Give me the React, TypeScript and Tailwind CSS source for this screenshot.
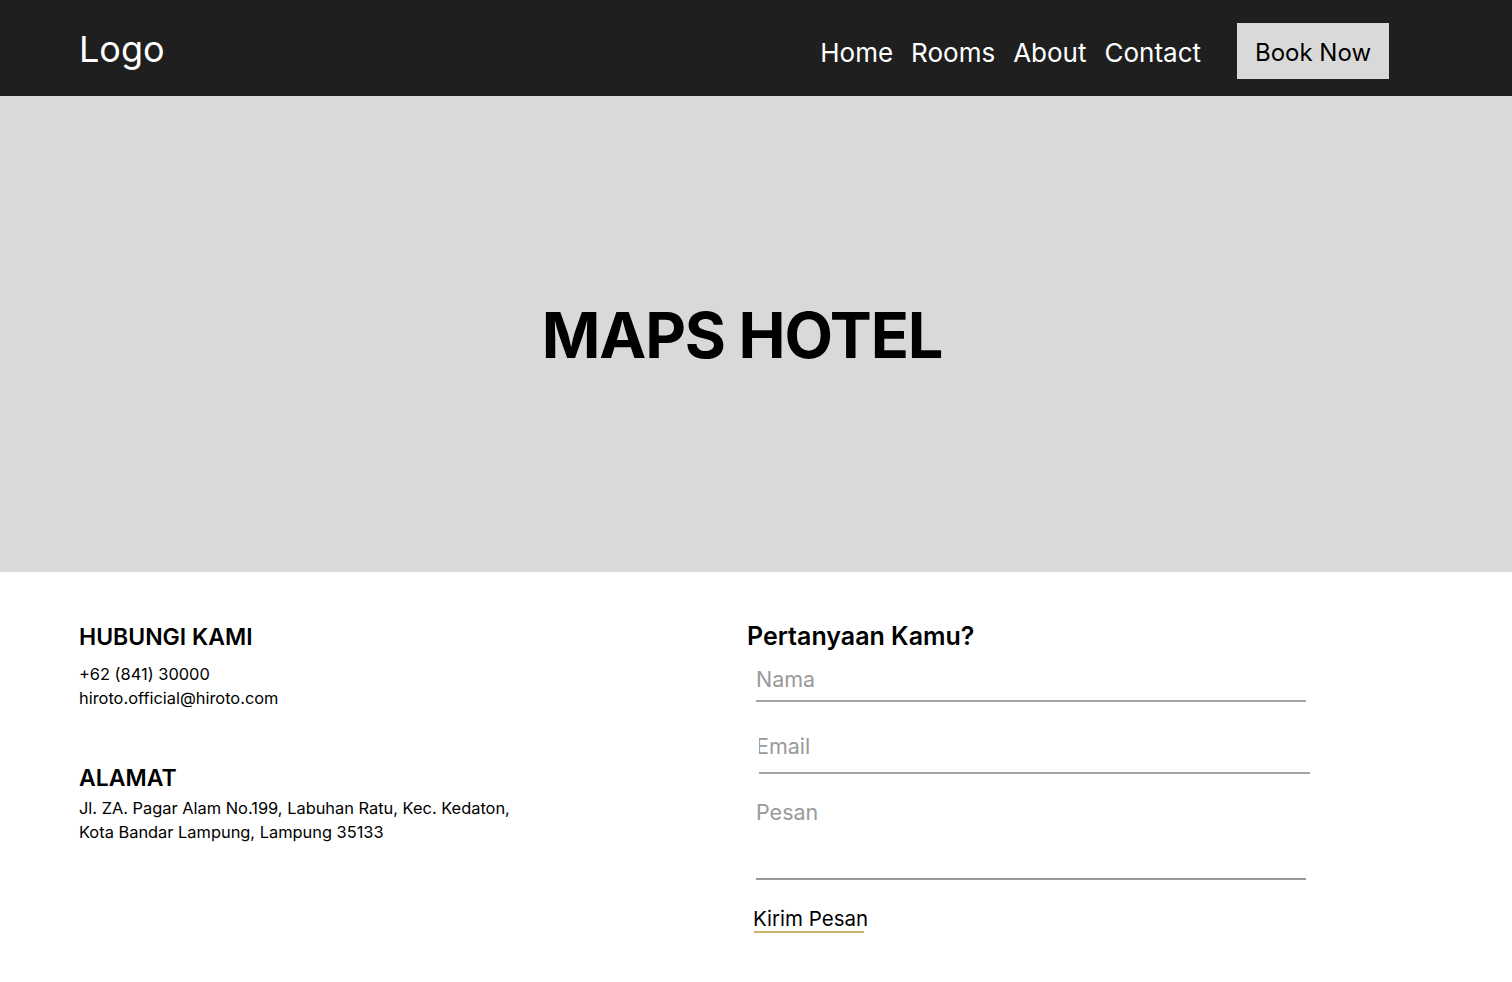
export default function App() {
  return (
    <div className="min-h-screen bg-white font-['Inter',sans-serif] text-black">
      {/* Header */}
      <header className="h-[96px] bg-[#1f1f1f] flex items-center justify-between pl-[79px] pr-[123px]">
        <div className="text-[36px] text-white mt-[2px]">Logo</div>
        <nav className="flex items-center mt-[6px]">
          <ul className="flex items-center gap-[18px] text-[26px] text-white mr-[36px] mt-[3px]">
            <li>Home</li>
            <li>Rooms</li>
            <li>About</li>
            <li>Contact</li>
          </ul>
          <button className="w-[152px] h-[56px] pt-[3px] bg-[#d9d9d9] text-[24px] text-black">Book Now</button>
        </nav>
      </header>

      {/* Hero */}
      <section className="h-[476px] bg-[#d9d9d9] flex items-center justify-center">
        <h1 className="text-[63px] font-bold tracking-[-1.2px] -ml-[28px] mt-[2px]">MAPS HOTEL</h1>
      </section>

      {/* Contact */}
      <section className="grid grid-cols-[668px_1fr] pl-[79px] pt-[50px] pb-[40px]">
        <div>
          <h2 className="text-[23px] font-semibold leading-[30px]">HUBUNGI KAMI</h2>
          <div className="mt-[10px] text-[16.4px] leading-[24px]">
            <p>+62 (841) 30000</p>
            <p>hiroto.official@hiroto.com</p>
          </div>
          <h2 className="mt-[53px] text-[23px] font-semibold leading-[30px]">ALAMAT</h2>
          <div className="mt-[3px] text-[16.4px] leading-[24px]">
            <p>Jl. ZA. Pagar Alam No.199, Labuhan Ratu, Kec. Kedaton,</p>
            <p>Kota Bandar Lampung, Lampung 35133</p>
          </div>
        </div>
        <div>
          <h2 className="text-[25px] font-semibold leading-[30px] -mt-[1px]">Pertanyaan Kamu?</h2>
          <form className="flex flex-col">
            <input
              placeholder="Nama"
              className="ml-[9px] -mt-[1px] w-[550px] h-[52px] pt-[8px] text-[21.5px] border-b-2 border-[#a3a3a3] outline-none placeholder:text-[#9a9a9a]"
            />
            <input
              placeholder="Email"
              className="ml-[12px] mt-[18px] w-[551px] h-[54px] -indent-[3px] text-[21.5px] border-b-2 border-[#a3a3a3] outline-none placeholder:text-[#9a9a9a]"
            />
            <textarea
              placeholder="Pesan"
              className="ml-[9px] mt-[22px] w-[550px] h-[84px] text-[21.5px] leading-[32px] border-b-2 border-[#999999] outline-none resize-none placeholder:text-[#9a9a9a]"
            />
            <div className="mt-[27px] ml-[6px] w-fit">
              <button type="button" className="block text-[20.5px] leading-[24px]">
                Kirim Pesan
              </button>
              <div className="ml-[1px] w-[110px] h-[2px] bg-[#c9b46a]" />
            </div>
          </form>
        </div>
      </section>
    </div>
  );
}
